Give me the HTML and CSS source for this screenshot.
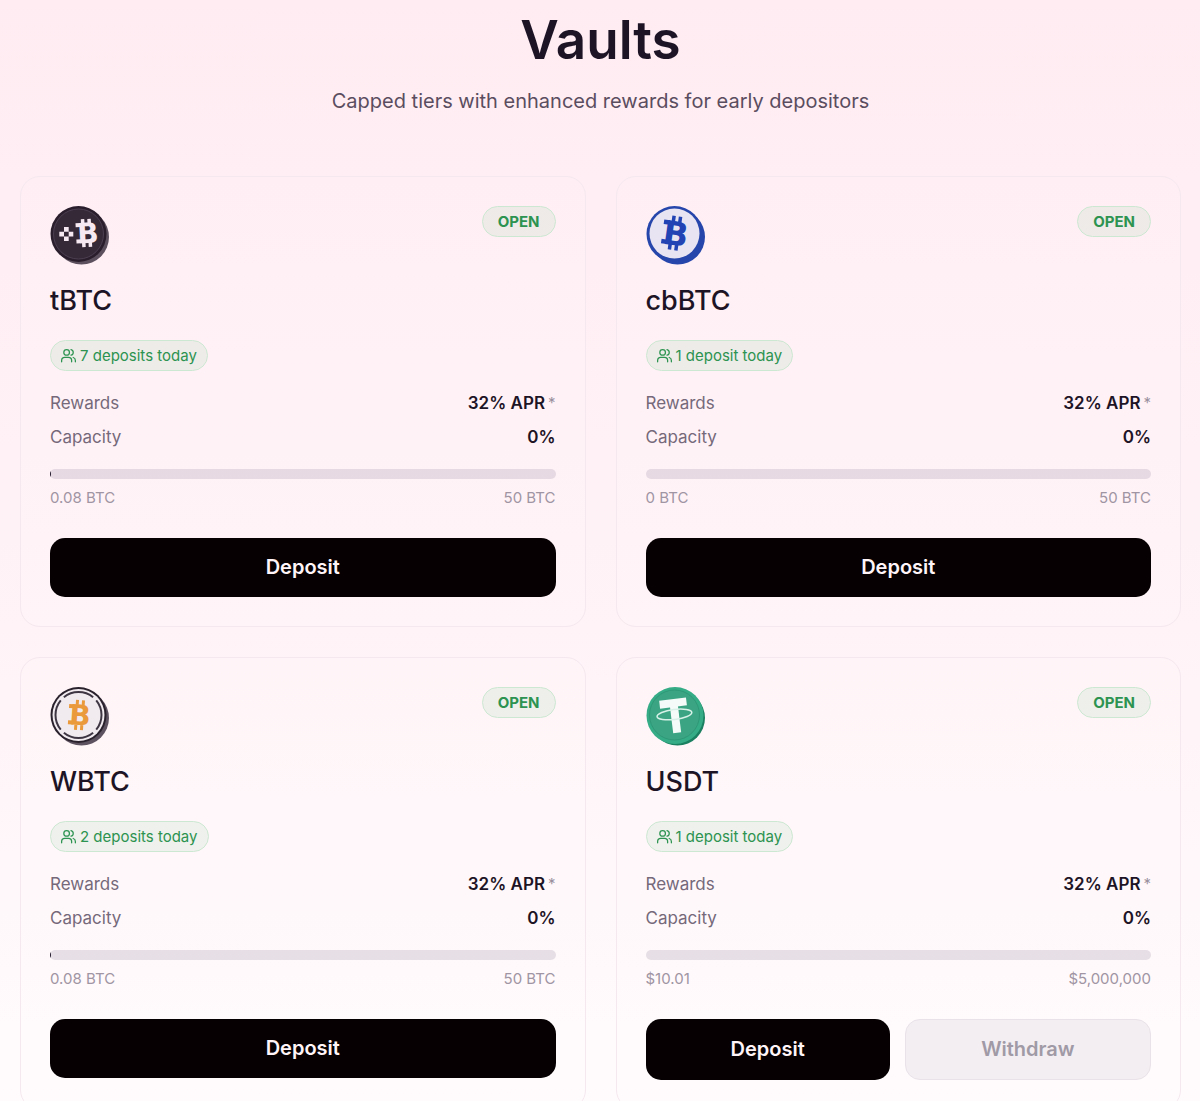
FILE: index.html
```html
<!DOCTYPE html>
<html lang="en">
<head>
  <meta charset="UTF-8" />
  <meta name="viewport" content="width=device-width, initial-scale=1.0" />
  <title>Vaults</title>
  <link rel="stylesheet" href="styles.css">
</head>
<body>

  <svg class="sprite" aria-hidden="true">
    <symbol id="users" viewBox="0 0 24 24">
      <path d="M17 22v-2a5 5 0 0 0-5-5H6a5 5 0 0 0-5 5v2" />
      <circle cx="9" cy="7" r="4.500" />
      <path d="M23 22v-2a5 5 0 0 0-3.500-4.800" />
      <path d="M16 2.600a4.500 4.500 0 0 1 0 8.800" />
    </symbol>
  </svg>

  <main class="vaults">
    <header class="intro">
      <h1>Vaults</h1>
      <p>Capped tiers with enhanced rewards for early depositors</p>
    </header>

    <div class="grid">
      <article class="card">
        <div class="card-top">
          <svg class="coin" viewBox="0 0 60 60" aria-hidden="true">
            <circle cx="31.5" cy="31" r="27.5" fill="#5d505e" />
            <circle cx="28.5" cy="28" r="28" fill="#2a1d2c" />
            <circle cx="28.5" cy="28" r="25" fill="#352938" stroke="#4c3f50" stroke-width="1" />
            <g fill="#f7e9f1">
              <path d="M14 21h4.700v4.700H14zM9.300 25.700H14v4.700H9.300zM18.700 25.700h4.600v4.700h-4.600zM14 30.400h4.700v4.700H14z" />
              <g transform="rotate(-3 37 27)">
                <path d="M31.500 13H35v5h-3.500zM38 13h3.500v5H38zM31.500 36H35v5h-3.500zM38 36h3.500v5H38zM26 16.600h5v4h-5zM26 33h5v4h-5z" />
                <text class="coin-mark" x="38" y="37" font-size="28">B</text>
              </g>
            </g>
          </svg>
          <span class="status">OPEN</span>
        </div>
        <h2>tBTC</h2>
        <p class="activity"><svg aria-hidden="true"><use href="#users" /></svg>7 deposits today</p>
        <dl class="stats">
          <div><dt>Rewards</dt><dd>32% APR<sup>*</sup></dd></div>
          <div><dt>Capacity</dt><dd>0%</dd></div>
        </dl>
        <div class="bar"><div class="bar-fill" style="width: 0.16%"></div></div>
        <div class="limits"><span>0.08 BTC</span><span>50 BTC</span></div>
        <div class="actions"><button type="button" class="deposit">Deposit</button></div>
      </article>

      <article class="card">
        <div class="card-top">
          <svg class="coin" viewBox="0 0 60 60" aria-hidden="true">
            <circle cx="31.5" cy="31" r="27.5" fill="#2746ac" />
            <circle cx="28.5" cy="28" r="28" fill="#2746ac" />
            <circle cx="28.5" cy="27.5" r="25" fill="#e9e4f1" />
            <g fill="#2143b4" transform="rotate(8 28 27)">
              <path d="M24 10h3.500v7H24zM30.500 10H34v7h-3.500zM24 37h3.500v7H24zM30.500 37H34v7h-3.500zM16.500 15h6v4.500h-6zM16.500 34.500h6V39h-6z" />
              <text class="coin-mark" x="30" y="39" font-size="33">B</text>
            </g>
          </svg>
          <span class="status">OPEN</span>
        </div>
        <h2>cbBTC</h2>
        <p class="activity"><svg aria-hidden="true"><use href="#users" /></svg>1 deposit today</p>
        <dl class="stats">
          <div><dt>Rewards</dt><dd>32% APR<sup>*</sup></dd></div>
          <div><dt>Capacity</dt><dd>0%</dd></div>
        </dl>
        <div class="bar"><div class="bar-fill" style="width: 0%"></div></div>
        <div class="limits"><span>0 BTC</span><span>50 BTC</span></div>
        <div class="actions"><button type="button" class="deposit">Deposit</button></div>
      </article>

      <article class="card">
        <div class="card-top">
          <svg class="coin" viewBox="0 0 60 60" aria-hidden="true">
            <circle cx="31.5" cy="31" r="27.5" fill="#5d5360" />
            <circle cx="28.5" cy="28" r="28" fill="#29212c" />
            <circle cx="28.5" cy="28" r="26" fill="#f1ebf0" />
            <circle class="ring" cx="28.5" cy="28" r="23" stroke="#3f3643" stroke-width="2" pathLength="100" stroke-dasharray="22 3" stroke-dashoffset="-14" />
            <g fill="#eb9a3b" transform="rotate(4 29 28)">
              <path d="M25 13h3v5h-3zM31 13h3v5h-3zM25 38h3v5h-3zM31 38h3v5h-3zM18.500 17.600h5v4h-5zM18.500 34h5v4h-5z" />
              <text class="coin-mark" x="30" y="38" font-size="28">B</text>
            </g>
          </svg>
          <span class="status">OPEN</span>
        </div>
        <h2>WBTC</h2>
        <p class="activity"><svg aria-hidden="true"><use href="#users" /></svg>2 deposits today</p>
        <dl class="stats">
          <div><dt>Rewards</dt><dd>32% APR<sup>*</sup></dd></div>
          <div><dt>Capacity</dt><dd>0%</dd></div>
        </dl>
        <div class="bar"><div class="bar-fill" style="width: 0.16%"></div></div>
        <div class="limits"><span>0.08 BTC</span><span>50 BTC</span></div>
        <div class="actions"><button type="button" class="deposit">Deposit</button></div>
      </article>

      <article class="card">
        <div class="card-top">
          <svg class="coin" viewBox="0 0 60 60" aria-hidden="true">
            <circle cx="31.5" cy="31" r="27.5" fill="#1b8060" />
            <circle cx="29" cy="28.5" r="28.5" fill="#35ac86" />
            <circle cx="28.5" cy="28" r="25" fill="#3ba583" stroke="#2f9877" stroke-width="1" />
            <g transform="rotate(-7 28 28)">
              <rect x="15" y="12" width="27" height="8" fill="#f5fbf8" />
              <rect x="25" y="18" width="8" height="28" fill="#f5fbf8" />
              <ellipse class="ring" cx="28.5" cy="27.5" rx="17.5" ry="5" stroke="#d8f1e8" stroke-width="1.5" />
            </g>
          </svg>
          <span class="status">OPEN</span>
        </div>
        <h2>USDT</h2>
        <p class="activity"><svg aria-hidden="true"><use href="#users" /></svg>1 deposit today</p>
        <dl class="stats">
          <div><dt>Rewards</dt><dd>32% APR<sup>*</sup></dd></div>
          <div><dt>Capacity</dt><dd>0%</dd></div>
        </dl>
        <div class="bar"><div class="bar-fill" style="width: 0%"></div></div>
        <div class="limits"><span>$10.01</span><span>$5,000,000</span></div>
        <div class="actions">
          <button type="button" class="deposit">Deposit</button>
          <button type="button" class="withdraw" disabled>Withdraw</button>
        </div>
      </article>
    </div>
  </main>

</body>
</html>
```
FILE: styles.css
```css
* {
  box-sizing: border-box;
}
body {
  margin: 0;
  font-family: Inter, "Liberation Sans", sans-serif;
  color: #1d1426;
  background: linear-gradient(#ffecf2, #fff3f7 55%, #fffcfd);
}
h1, h2, p, dl, dd {
  margin: 0;
}
.sprite {
  display: none;
}
.vaults {
  padding: 10px 19px 30px 20px;
}
.intro {
  text-align: center;
  margin-bottom: 60px;
}
.intro h1 {
  font-size: 53px;
  line-height: 60px;
  font-weight: 600;
}
.intro p {
  margin-top: 16px;
  font-size: 20px;
  line-height: 30px;
  color: #5b4d60;
}

/* cards */
.grid {
  display: grid;
  grid-template-columns: 1fr 1fr;
  gap: 30px;
}
.card {
  padding: 29px;
  border: 1px solid #f5e8ef;
  border-radius: 20px;
  background: rgba(255, 255, 255, 0.1);
}
.card-top {
  display: flex;
  justify-content: space-between;
  align-items: flex-start;
}
.coin {
  display: block;
  width: 60px;
  height: 60px;
}
.coin-mark {
  font-family: "DejaVu Sans", sans-serif;
  font-weight: bold;
  text-anchor: middle;
}
.ring {
  fill: none;
}
.status, .activity {
  border: 1px solid #cde8d2;
  border-radius: 16px;
  background: rgba(40, 180, 90, 0.08);
  color: #2c9350;
  font-size: 15px;
  line-height: 29px;
}
.status {
  padding: 0 15px;
  font-weight: 700;
}
.card h2 {
  margin-top: 15px;
  font-size: 27px;
  line-height: 40px;
  font-weight: 500;
}
.activity {
  display: flex;
  align-items: center;
  gap: 4px;
  width: fit-content;
  margin-top: 19px;
  padding: 0 10px;
}
.activity svg {
  width: 15px;
  height: 15px;
  fill: none;
  stroke: currentColor;
  stroke-width: 2;
  stroke-linecap: round;
  stroke-linejoin: round;
}
.stats {
  display: grid;
  gap: 10px;
  margin-top: 20px;
  font-size: 17px;
  line-height: 24px;
}
.stats div, .limits {
  display: flex;
  justify-content: space-between;
}
.stats dt {
  color: #75697a;
}
.stats dd {
  font-weight: 600;
}
.stats sup {
  margin-left: 3px;
  font-size: 15px;
  line-height: 1;
  font-weight: 400;
  vertical-align: 1px;
  color: #9a909e;
}
.bar {
  height: 10px;
  margin-top: 20px;
  border-radius: 5px;
  background: rgba(60, 40, 80, 0.12);
  overflow: hidden;
}
.bar-fill {
  height: 100%;
  background: #1d1426;
}
.limits {
  margin-top: 8px;
  font-size: 15px;
  line-height: 22px;
  color: #9f95a3;
}

/* buttons */
.actions {
  display: flex;
  gap: 15px;
  margin-top: 29px;
}
button {
  flex: 1 1 auto;
  padding: 15px;
  border: none;
  border-radius: 15px;
  font-family: inherit;
  font-size: 20px;
  line-height: 29px;
  font-weight: 600;
  cursor: pointer;
}
.actions button {
  flex: 1;
}
.deposit {
  background: #060002;
  color: #fff5f8;
}
.withdraw {
  border: 1px solid #e9e3e9;
  background: #f3eef2;
  color: #a09aa6;
  cursor: default;
}
```
